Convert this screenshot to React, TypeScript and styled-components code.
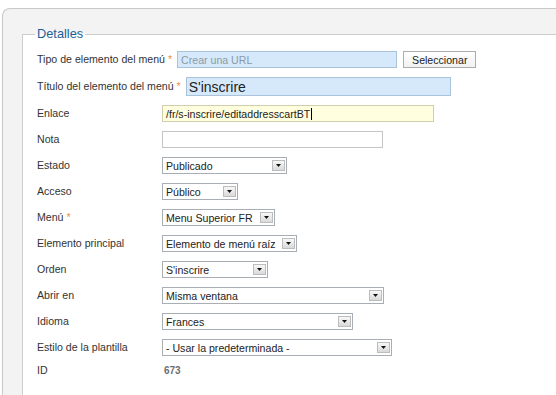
import React, { FC } from "react";
import styled, { createGlobalStyle } from "styled-components";

const GlobalStyle = createGlobalStyle`
  html, body {
    margin: 0;
    padding: 0;
    background: #ffffff;
    overflow: hidden;
  }
  body {
    font-family: "Liberation Sans", Arial, sans-serif;
    color: #333333;
  }
`;

// the panel and the fieldset run on past the right and bottom edge of the view
const Panel = styled.div`
  box-sizing: border-box;
  display: flex;
  flex-direction: column;
  width: 554px;
  height: 387px;
  margin: 8px 0 0 2px;
  padding: 17px 0 0 19px;
  background: #f3f3f3;
  border: 1px solid #c9c9c9;
  border-right: none;
  border-bottom: none;
  border-radius: 8px 0 0 0;
`;

const Fieldset = styled.fieldset`
  flex: 1;
  min-width: 0;
  margin: 0;
  padding: 9px 0 0 14px;
  background: #ffffff;
  border: 1px solid #cdcdcd;
  border-right: none;
  border-bottom: none;
`;

const Legend = styled.legend`
  margin-left: -2px;
  padding: 0 2px;
  font-size: 12.8px;
  line-height: 16px;
  color: #1d5f96;
`;

const Row = styled.div<{ $h?: number }>`
  display: flex;
  align-items: center;
  height: ${(p) => p.$h ?? 17}px;
  margin-bottom: 9px;
`;

const Label = styled.label`
  min-width: 120px;
  margin-right: 5px;
  font-size: 10.6px;
  line-height: 17px;
  color: #333333;
  white-space: nowrap;
`;

const Star = styled.span`
  color: #ec8b4a;
`;

const TextInput = styled.div<{ $w: number; $tone?: "blue" | "yellow" | "white"; $big?: boolean }>`
  box-sizing: border-box;
  width: ${(p) => p.$w}px;
  height: ${(p) => (p.$big ? 19 : 17)}px;
  padding: 0 ${(p) => (p.$big ? 2 : 3)}px;
  display: flex;
  align-items: center;
  font-size: ${(p) => (p.$big ? 14 : 10.6)}px;
  color: #222222;
  white-space: nowrap;
  overflow: hidden;
  background: ${(p) =>
    p.$tone === "blue" ? "#d5e9fb" : p.$tone === "yellow" ? "#ffffe0" : "#ffffff"};
  border: 1px solid
    ${(p) => (p.$tone === "blue" ? "#a9c3da" : p.$tone === "yellow" ? "#cfcfae" : "#c4c4c4")};
`;

const Placeholder = styled.span`
  color: #8b9aa8;
`;

const Caret = styled.span`
  display: inline-block;
  width: 1px;
  height: 12px;
  margin-left: 1px;
  background: #000000;
`;

const Button = styled.button`
  box-sizing: border-box;
  height: 17px;
  margin-left: 6px;
  padding: 0 8px;
  font-family: inherit;
  font-size: 10.6px;
  color: #222222;
  background: linear-gradient(#ffffff, #f1f1f1);
  border: 1px solid #adadad;
  border-radius: 0;
`;

const SelectBox = styled.div<{ $w: number }>`
  box-sizing: border-box;
  width: ${(p) => p.$w}px;
  height: 17px;
  padding: 0 1px 0 3px;
  display: flex;
  align-items: center;
  justify-content: space-between;
  font-size: 10.6px;
  color: #222222;
  white-space: nowrap;
  background: #ffffff;
  border: 1px solid #a9aeb5;
`;

const Arrow = styled.span`
  box-sizing: border-box;
  width: 13px;
  height: 11px;
  display: flex;
  align-items: center;
  justify-content: center;
  background: linear-gradient(#f8f8f8, #d9d9d9);
  border: 1px solid #bcbcbc;
`;

const IdValue = styled.span`
  padding-left: 2px;
  font-size: 10px;
  font-weight: bold;
  color: #6e6e6e;
`;

const Select: FC<{ w: number; value: string }> = ({ w, value }) => (
  <SelectBox $w={w}>
    <span>{value}</span>
    <Arrow>
      <svg width="5" height="3" viewBox="0 0 5 3">
        <path d="M0 0h5L2.5 3z" fill="#111" />
      </svg>
    </Arrow>
  </SelectBox>
);

const selects = [
  { label: "Estado", w: 125, value: "Publicado" },
  { label: "Acceso", w: 76, value: "Público" },
  { label: "Menú", w: 113, value: "Menu Superior FR", required: true },
  { label: "Elemento principal", w: 135, value: "Elemento de menú raíz" },
  { label: "Orden", w: 106, value: "S'inscrire" },
  { label: "Abrir en", w: 222, value: "Misma ventana" },
  { label: "Idioma", w: 191, value: "Frances" },
  { label: "Estilo de la plantilla", w: 230, value: "- Usar la predeterminada -" }
];

const App: FC = () => (
  <>
    <GlobalStyle />
    <Panel>
      <Fieldset>
        <Legend>Detalles</Legend>
        <Row>
          <Label>
            Tipo de elemento del menú <Star>*</Star>
          </Label>
          <TextInput $w={220} $tone="blue">
            <Placeholder>Crear una URL</Placeholder>
          </TextInput>
          <Button>Seleccionar</Button>
        </Row>
        <Row $h={19}>
          <Label>
            Título del elemento del menú <Star>*</Star>
          </Label>
          <TextInput $w={265} $tone="blue" $big>
            S'inscrire
          </TextInput>
        </Row>
        <Row>
          <Label>Enlace</Label>
          <TextInput $w={272} $tone="yellow">
            /fr/s-inscrire/editaddresscartBT
            <Caret />
          </TextInput>
        </Row>
        <Row>
          <Label>Nota</Label>
          <TextInput $w={221} />
        </Row>
        {selects.map((s) => (
          <Row key={s.label}>
            <Label>
              {s.label}
              {s.required && (
                <>
                  {" "}
                  <Star>*</Star>
                </>
              )}
            </Label>
            <Select w={s.w} value={s.value} />
          </Row>
        ))}
        <Row $h={11}>
          <Label>ID</Label>
          <IdValue>673</IdValue>
        </Row>
      </Fieldset>
    </Panel>
  </>
);

export default App;
